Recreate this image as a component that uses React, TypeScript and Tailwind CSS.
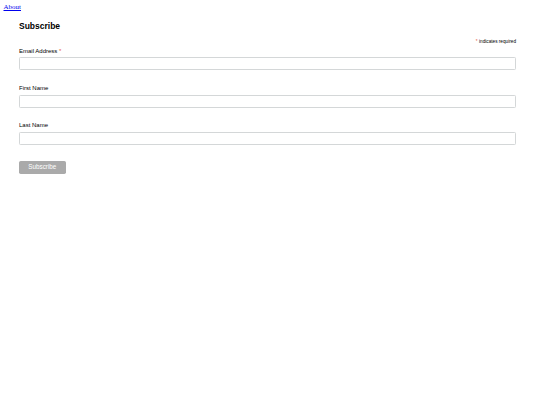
const fields = [
  { label: "Email Address", required: true, type: "email", gap: "mt-[3px]" },
  { label: "First Name", required: false, type: "text", gap: "mt-[14.8px]" },
  { label: "Last Name", required: false, type: "text", gap: "mt-[14.3px]" },
];

export default function App() {
  return (
    <div className="min-h-[405px] w-[540px] bg-white text-black">
      <div className="pl-[3.5px] pt-[3.5px] font-['Liberation_Serif',serif] text-[7px] leading-none">
        <a href="#" className="text-[#0000ee] underline">
          About
        </a>
      </div>

      <form
        className="ml-[19px] flex w-[497px] flex-col font-['Liberation_Sans',Arial,sans-serif]"
        onSubmit={(e) => e.preventDefault()}
      >
        <h2 className="mt-[11px] text-[8.5px] font-bold leading-none">
          Subscribe
        </h2>
        <div className="mt-[9.85px] text-right text-[4.7px] leading-none">
          <span className="text-[#e85c41]">*</span> indicates required
        </div>

        {fields.map((f) => (
          <div key={f.label} className={`${f.gap} flex flex-col`}>
            <label className="text-[6px] leading-none">
              {f.label}
              {f.required && <span className="text-[#e85c41]"> *</span>}
            </label>
            <input
              type={f.type}
              className="mt-[3.4px] h-[13.5px] w-full rounded-[1.3px] border border-[#d4d7d8] bg-white outline-none"
            />
          </div>
        ))}

        <div className="mt-[15.2px] flex">
          <button
            type="submit"
            className="h-[13.5px] rounded-[1.7px] bg-[#aaaaaa] px-[9.3px] text-[6.3px] leading-none text-white"
          >
            Subscribe
          </button>
        </div>
      </form>
    </div>
  );
}
